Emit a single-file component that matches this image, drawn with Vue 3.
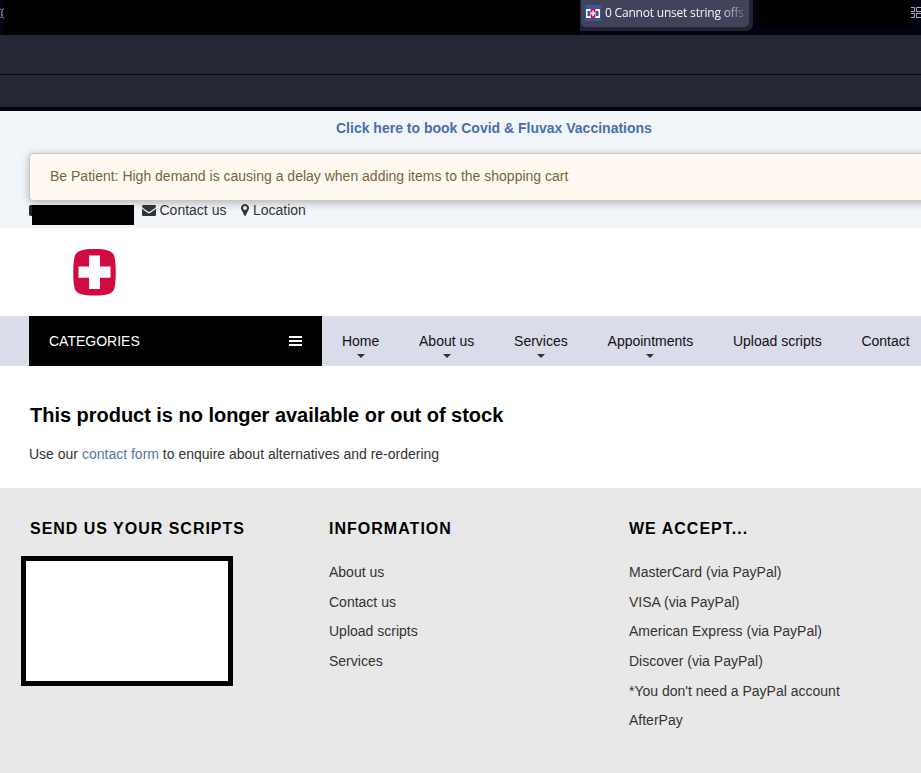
<script setup>
const nav = [
  { label: 'Home', sub: true },
  { label: 'About us', sub: true },
  { label: 'Services', sub: true },
  { label: 'Appointments', sub: true },
  { label: 'Upload scripts', sub: false },
  { label: 'Contact', sub: false },
]
const info = ['About us', 'Contact us', 'Upload scripts', 'Services']
const payments = [
  'MasterCard (via PayPal)',
  'VISA (via PayPal)',
  'American Express (via PayPal)',
  'Discover (via PayPal)',
  "*You don't need a PayPal account",
  'AfterPay',
]
</script>

<template>
  <div class="window">
    <div class="tabs">
      <span class="edge"><svg width="4" height="35" viewBox="0 0 4 35"><path d="M0 9.500h.8M0 17.500h.8M3.500 8.500Q1.500 10 1.800 13.500Q1.500 17 3.500 18.500" fill="none" stroke="#b9bac6" stroke-width="1" /></svg></span>
      <span class="blackout"></span>
      <div class="tab-holder">
        <div class="tab">
          <svg class="favicon" width="16" height="16" viewBox="0 0 16 16">
            <rect width="16" height="16" fill="#3459a8" />
            <path d="M1 4h5v9H1zM10 4h5v9h-5z" fill="#fff" />
            <path d="M2.500 6H5v5H2.500zM11 6h2.500v5H11z" fill="#3459a8" />
            <rect x="5.500" y="3" width="5" height="10.500" rx="2.300" fill="#d40f45" />
            <path d="M7.300 5.500h1.500v2h1.200v1.800H8.800v2H7.300v-2H6V7.500h1.300z" fill="#fff" />
          </svg>
          <span class="tab-title">0 Cannot unset string offs</span>
        </div>
      </div>
      <span class="blackout short"></span>
      <svg class="grid-icon" width="10" height="35" viewBox="0 0 10 35">
        <path d="M0 7.500h3.500v4H0M0 13.500h3.500v4H0M10 7.500H5.500v4H10M10 13.500H5.500v4H10" fill="none" stroke="#a9aab8" />
      </svg>
    </div>
    <div class="toolbar"></div>
    <div class="bookmarks"></div>

    <div class="topbar">
      <a class="promo">Click here to book Covid &amp; Fluvax Vaccinations</a>
      <div class="notice"><span>Be Patient: High demand is causing a delay when adding items to the shopping cart</span></div>
      <div class="contacts">
        <span class="phone"><i class="redacted"></i></span>
        <a class="mail">
          <svg width="14" height="11" viewBox="0 0 14 11"><path d="M0 1.200Q0 0 1.200 0h11.600Q14 0 14 1.200q0 1-1.200 2L8 6.600q-1 .7-2 0L1.200 3.200Q0 2.300 0 1.200zM0 3.700l5.500 4q1.500 1 3 0l5.500-4v6.100q0 1.200-1.200 1.200H1.200Q0 11 0 9.800z" fill="#333" /></svg>
          <span>Contact us</span>
        </a>
        <a class="place">
          <svg width="8" height="12" viewBox="0 0 8 12"><path fill-rule="evenodd" d="M4 0a4 4 0 0 1 3.700 5.500L4.700 11.600q-.7.800-1.400 0L.3 5.500A4 4 0 0 1 4 0zm0 2a2 2 0 1 0 0 4 2 2 0 0 0 0-4z" fill="#333" /></svg>
          <span>Location</span>
        </a>
      </div>
    </div>

    <header class="brand">
      <svg width="45" height="49" viewBox="0 0 45 49">
        <path d="M22.500 1C34 1 40 2.500 42 7.500c2.300 6 2.300 28 0 34C40 46 34 47.500 22.500 47.500S5 46 3 41.500c-2.300-6-2.300-28 0-34C5 2.500 11 1 22.500 1z" fill="#d10a42" />
        <path d="M17 7.500h11v11h10.500v11.300H28V41H17V29.800H6.500V18.500H17z" fill="#fff" />
      </svg>
    </header>

    <nav class="nav">
      <div class="categories">
        <span>CATEGORIES</span>
        <svg width="13" height="10" viewBox="0 0 13 10"><path d="M0 1h13M0 5h13M0 9h13" stroke="#fff" stroke-width="2" /></svg>
      </div>
      <a v-for="n in nav" :key="n.label" class="nav-item" :class="{ sub: n.sub }">
        <span>{{ n.label }}</span>
      </a>
    </nav>

    <main class="content">
      <h1>This product is no longer available or out of stock</h1>
      <p>Use our <a>contact form</a> to enquire about alternatives and re-ordering</p>
    </main>

    <footer class="footer">
      <section>
        <h2 class="scripts-title">SEND US YOUR SCRIPTS</h2>
        <div class="frame"></div>
      </section>
      <section>
        <h2>INFORMATION</h2>
        <ul><li v-for="i in info" :key="i">{{ i }}</li></ul>
      </section>
      <section>
        <h2>WE ACCEPT...</h2>
        <ul><li v-for="p in payments" :key="p">{{ p }}</li></ul>
      </section>
    </footer>
  </div>
</template>

<style>
body { margin: 0; overflow: hidden; }
</style>

<style scoped>
* { box-sizing: border-box; }
.window {
  width: 921px;
  height: 773px;
  overflow: hidden;
  display: flex;
  flex-direction: column;
  background: #fff;
  color: #333;
  font-family: "Liberation Sans", Arial, sans-serif;
  font-size: 14px;
  line-height: 20px;
}
.window > * { flex-shrink: 0; }
svg { display: block; }
.tabs { display: flex; height: 35px; background: #030412; }
.edge { width: 4px; background: #030414; }
.blackout { width: 576px; background: #000; }
.tab-holder { width: 173px; height: 31px; padding: 0 4px 4px 1px; background: #222333; border-radius: 0 0 7px 0; }
.tab { display: flex; height: 27px; padding: 5px 4px 0 4px; gap: 4px; background: #42425a; border-radius: 0 0 5px 5px; }
.favicon { flex-shrink: 0; }
.tab-title {
  width: 140px;
  height: 18px;
  white-space: nowrap;
  color: #f8f8fc;
  font: 12px/16px "Open Sans", "Noto Sans", sans-serif;
  letter-spacing: -.2px;
  mask-image: linear-gradient(90deg, #000 112px, transparent 146px);
}
.blackout.short { width: 153px; height: 27px; margin-left: 5px; }
.grid-icon { flex-shrink: 0; }
.toolbar { height: 40px; background: #262735; border-bottom: 1px solid #080916; }
.bookmarks { height: 36px; background: #262735; border-bottom: 4px solid #030412; }
.topbar { height: 117px; padding-top: 7px; background: #f2f6fb; }
.promo { display: block; width: 315px; margin-left: 336px; color: #4a6fae; font-weight: bold; white-space: nowrap; }
.notice {
  width: 920px;
  height: 48px;
  margin: 15px 0 0 29px;
  padding: 12px 20px;
  border: 1px solid #c9c7c6;
  border-radius: 4px;
  background: #fff9f2;
  box-shadow: 0 2px 9px rgba(0, 0, 0, .27);
  color: #75653a;
  white-space: nowrap;
}
.contacts { display: flex; height: 28px; margin-top: -1px; padding-left: 29px; }
.phone { width: 105px; height: 11px; margin-top: 5px; padding: 0 0 0 3px; background: linear-gradient(90deg, #222 11px, transparent 11px); border-radius: 2px; }
.redacted { display: block; width: 102px; height: 20px; background: #000; }
.mail, .place { display: flex; height: 20px; }
.mail { margin-left: 7.500px; gap: 4px; }
.mail svg { margin-top: 5px; }
.place { margin-left: 14.500px; gap: 4px; }
.place svg { margin-top: 4px; }
.brand { height: 88px; padding: 20px 0 0 72px; }
.nav { display: flex; height: 50px; background: #dbdce9; color: #111; white-space: nowrap; }
.nav > * { flex-shrink: 0; }
.categories {
  display: flex;
  align-items: center;
  justify-content: space-between;
  width: 293px;
  margin-left: 29px;
  padding: 0 20px;
  background: #000;
  color: #fff;
}
.nav-item { display: flex; flex-direction: column; align-items: center; padding: 15px 19.900px 0; }
.sub::after { content: ""; margin-top: 3px; border: 4px solid transparent; border-top-color: #333; border-bottom: 0; }
.content { height: 122px; padding: 37px 29px 0; }
.content h1 { margin: 0 0 17px 1px; color: #000; font-size: 20px; line-height: 24px; letter-spacing: -.025px; }
.content p { margin: 0; }
.content a { color: #5674ae; }
.footer { display: grid; grid-template-columns: 300px 300px 1fr; height: 285px; padding: 31px 0 0 29px; background: #e8e8e8; }
.footer h2 { margin: 0; color: #000; font-size: 16px; line-height: 20px; letter-spacing: 1.020px; }
.footer .scripts-title { padding-left: 1px; letter-spacing: .98px; }
.footer ul { margin: 18px 0 0; padding: 0; list-style: none; }
.footer li { height: 29.650px; line-height: 30px; }
.frame { width: 212px; height: 130px; margin: 17px 0 0 -8px; border: 5px solid #000; background: #fff; }
</style>
